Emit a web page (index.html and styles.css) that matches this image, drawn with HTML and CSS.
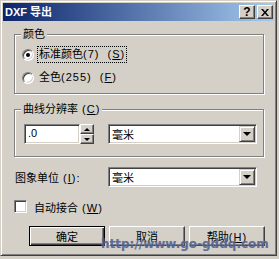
FILE: index.html
```html
<!DOCTYPE html>
<html lang="zh-CN">
<head>
<meta charset="utf-8">
<title>DXF 导出</title>
<link rel="stylesheet" href="styles.css">
</head>
<body>
<div class="window">
  <div class="titlebar">
    <span class="title">DXF 导出</span>
    <div class="tbtns">
      <span class="tbtn help">?</span>
      <span class="tbtn close"><svg width="8" height="7" viewBox="0 0 8 7"><path d="M0 0h2l2 2.5L6 0h2L5 3.5L8 7H6L4 4.5L2 7H0l3-3.5z" fill="#000"/></svg></span>
    </div>
  </div>
  <div class="client">
    <fieldset class="group g1">
      <legend>颜色</legend>
      <label class="opt"><span class="radio on"></span><span class="otext focus">标准颜色<span class="l">(7)&nbsp;&nbsp;(<u>S</u>)</span></span></label>
      <label class="opt opt2"><span class="radio"></span><span class="otext">全色<span class="l">(255)&nbsp;&nbsp;(<u>F</u>)</span></span></label>
    </fieldset>
    <fieldset class="group g2">
      <legend>曲线分辨率<span class="l">&nbsp;(<u>C</u>)</span></legend>
      <div class="resrow">
        <div class="edit">.0</div>
        <div class="spin"><span class="sb up"></span><span class="sb dn"></span></div>
        <div class="combo"><span>毫米</span><span class="drop"></span></div>
      </div>
    </fieldset>
    <div class="unitrow">
      <span class="lbl">图象单位<span class="l">&nbsp;(<u>I</u>):</span></span>
      <div class="combo"><span>毫米</span><span class="drop"></span></div>
    </div>
    <label class="chk"><span class="box"></span><span>自动接合<span class="l">&nbsp;(<u>W</u>)</span></span></label>
    <div class="buttons">
      <button class="btn default">确定</button>
      <button class="btn">取消</button>
      <button class="btn">帮助<span class="l">(<u>H</u>)</span></button>
    </div>
  </div>
  <div class="watermark">http://www.go-gddq.com</div>
</div>
</body>
</html>
```
FILE: styles.css
```css
html, body {
  margin: 0;
  padding: 0;
}
body {
  width: 279px;
  height: 259px;
  overflow: hidden;
  background: #d4d0c8;
  font: 11px "Liberation Sans", "Noto Sans CJK SC", sans-serif;
  color: #000;
}
u { text-decoration: underline; text-underline-offset: 1px; }
.l { letter-spacing: 1px; }

.window {
  position: relative;
  box-sizing: border-box;
  width: 277px;
  height: 256px;
  padding: 2px;
  background: #d4d0c8;
  border: 1px solid;
  border-color: #d4d0c8 #404040 #404040 #d4d0c8;
  box-shadow: inset 1px 1px 0 #fff, inset -1px -1px 0 #808080;
}

.titlebar {
  height: 18px;
  display: flex;
  align-items: center;
  justify-content: space-between;
  padding: 0 1px 0 2px;
  background: linear-gradient(to right, #0a246a, #a6caf0);
}
.title {
  color: #fff;
  font-weight: bold;
  font-size: 11px;
  line-height: 14px;
}
.tbtns { display: flex; gap: 2px; }
.tbtn {
  box-sizing: border-box;
  width: 16px;
  height: 14px;
  display: flex;
  align-items: center;
  justify-content: center;
  background: #d4d0c8;
  border: 1px solid;
  border-color: #fff #404040 #404040 #fff;
  box-shadow: inset -1px -1px 0 #808080;
  font-weight: bold;
  font-size: 12px;
  line-height: 12px;
}

.client {
  padding-left: 11px;
}

.group {
  box-sizing: border-box;
  width: 250px;
  margin: 0;
  padding: 0 0 0 6px;
  border: 1px solid #808080;
  box-shadow: 1px 1px 0 #fff, inset 1px 1px 0 #fff;
}
.group legend {
  padding: 0 2px;
  line-height: 13px;
  background: #d4d0c8;
}
.g1 { margin-top: 7px; padding-top: 5px; padding-bottom: 7px; }
.g2 { margin-top: 9px; padding-top: 8px; padding-bottom: 12px; }

.opt {
  display: flex;
  align-items: center;
  height: 17px;
  margin-left: 1px;
}
.opt2 { margin-top: 6px; }
.radio {
  box-sizing: border-box;
  width: 12px;
  height: 12px;
  border-radius: 50%;
  display: flex;
  align-items: center;
  justify-content: center;
  background: #fff;
  border: 1px solid;
  border-color: #808080 #fff #fff #808080;
  box-shadow: inset 1px 1px 0 #404040, inset -1px -1px 0 #d4d0c8;
}
.radio.on::after {
  content: "";
  width: 4px;
  height: 4px;
  border-radius: 50%;
  background: #000;
}
.otext {
  margin-left: 3px;
  padding: 1px 1px;
  line-height: 13px;
  border: 1px dotted transparent;
}
.otext.focus { border-color: #000; }

.resrow {
  display: flex;
  align-items: center;
  margin-left: 3px;
}
.edit {
  box-sizing: border-box;
  width: 56px;
  height: 20px;
  padding-left: 3px;
  line-height: 16px;
  background: #fff;
  border: 1px solid;
  border-color: #808080 #fff #fff #808080;
  box-shadow: inset 1px 1px 0 #404040, inset -1px -1px 0 #d4d0c8;
}
.spin {
  display: flex;
  flex-direction: column;
  width: 14px;
  height: 20px;
  margin-right: 14px;
}
.sb {
  box-sizing: border-box;
  height: 10px;
  display: flex;
  align-items: center;
  justify-content: center;
  background: #d4d0c8;
  border: 1px solid;
  border-color: #fff #404040 #404040 #fff;
  box-shadow: inset -1px -1px 0 #808080;
}
.sb.up::after {
  content: "";
  border-left: 3px solid transparent;
  border-right: 3px solid transparent;
  border-bottom: 3px solid #000;
}
.sb.dn::after {
  content: "";
  border-left: 3px solid transparent;
  border-right: 3px solid transparent;
  border-top: 3px solid #000;
}

.combo {
  box-sizing: border-box;
  width: 149px;
  height: 20px;
  display: flex;
  align-items: center;
  justify-content: space-between;
  padding: 2px 2px 2px 3px;
  background: #fff;
  border: 1px solid;
  border-color: #808080 #fff #fff #808080;
  box-shadow: inset 1px 1px 0 #404040, inset -1px -1px 0 #d4d0c8;
}
.drop {
  box-sizing: border-box;
  width: 16px;
  height: 16px;
  margin-right: -1px;
  display: flex;
  align-items: center;
  justify-content: center;
  background: #d4d0c8;
  border: 1px solid;
  border-color: #d4d0c8 #404040 #404040 #d4d0c8;
  box-shadow: inset 1px 1px 0 #fff, inset -1px -1px 0 #808080;
}
.drop::after {
  content: "";
  border-left: 4px solid transparent;
  border-right: 4px solid transparent;
  border-top: 4px solid #000;
}

.unitrow {
  display: flex;
  align-items: center;
  margin-top: 10px;
}
.lbl {
  flex: 0 0 93px;
  margin-left: 1px;
}

.chk {
  display: flex;
  align-items: center;
  gap: 7px;
  margin-top: 13px;
  height: 13px;
}
.box {
  box-sizing: border-box;
  width: 13px;
  height: 13px;
  background: #fff;
  border: 1px solid;
  border-color: #808080 #fff #fff #808080;
  box-shadow: inset 1px 1px 0 #404040, inset -1px -1px 0 #d4d0c8;
}

.buttons {
  display: flex;
  gap: 4px;
  margin-top: 13px;
  margin-left: 15px;
}
.btn {
  box-sizing: border-box;
  width: 76px;
  height: 20px;
  padding: 0;
  margin: 0;
  font: inherit;
  color: #000;
  background: #d4d0c8;
  border: 1px solid;
  border-color: #fff #404040 #404040 #fff;
  box-shadow: inset -1px -1px 0 #808080;
}
.btn.default {
  border-color: #000;
  box-shadow: inset 1px 1px 0 #fff, inset -1px -1px 0 #404040, inset -2px -2px 0 #808080;
}

.watermark {
  position: absolute;
  left: 100px;
  top: 236px;
  font: bold 12px "DejaVu Sans", sans-serif;
  color: #4d5c8c;
  opacity: 0.85;
  text-shadow: 0 0 1px #b8bcd0;
  white-space: nowrap;
}
```
